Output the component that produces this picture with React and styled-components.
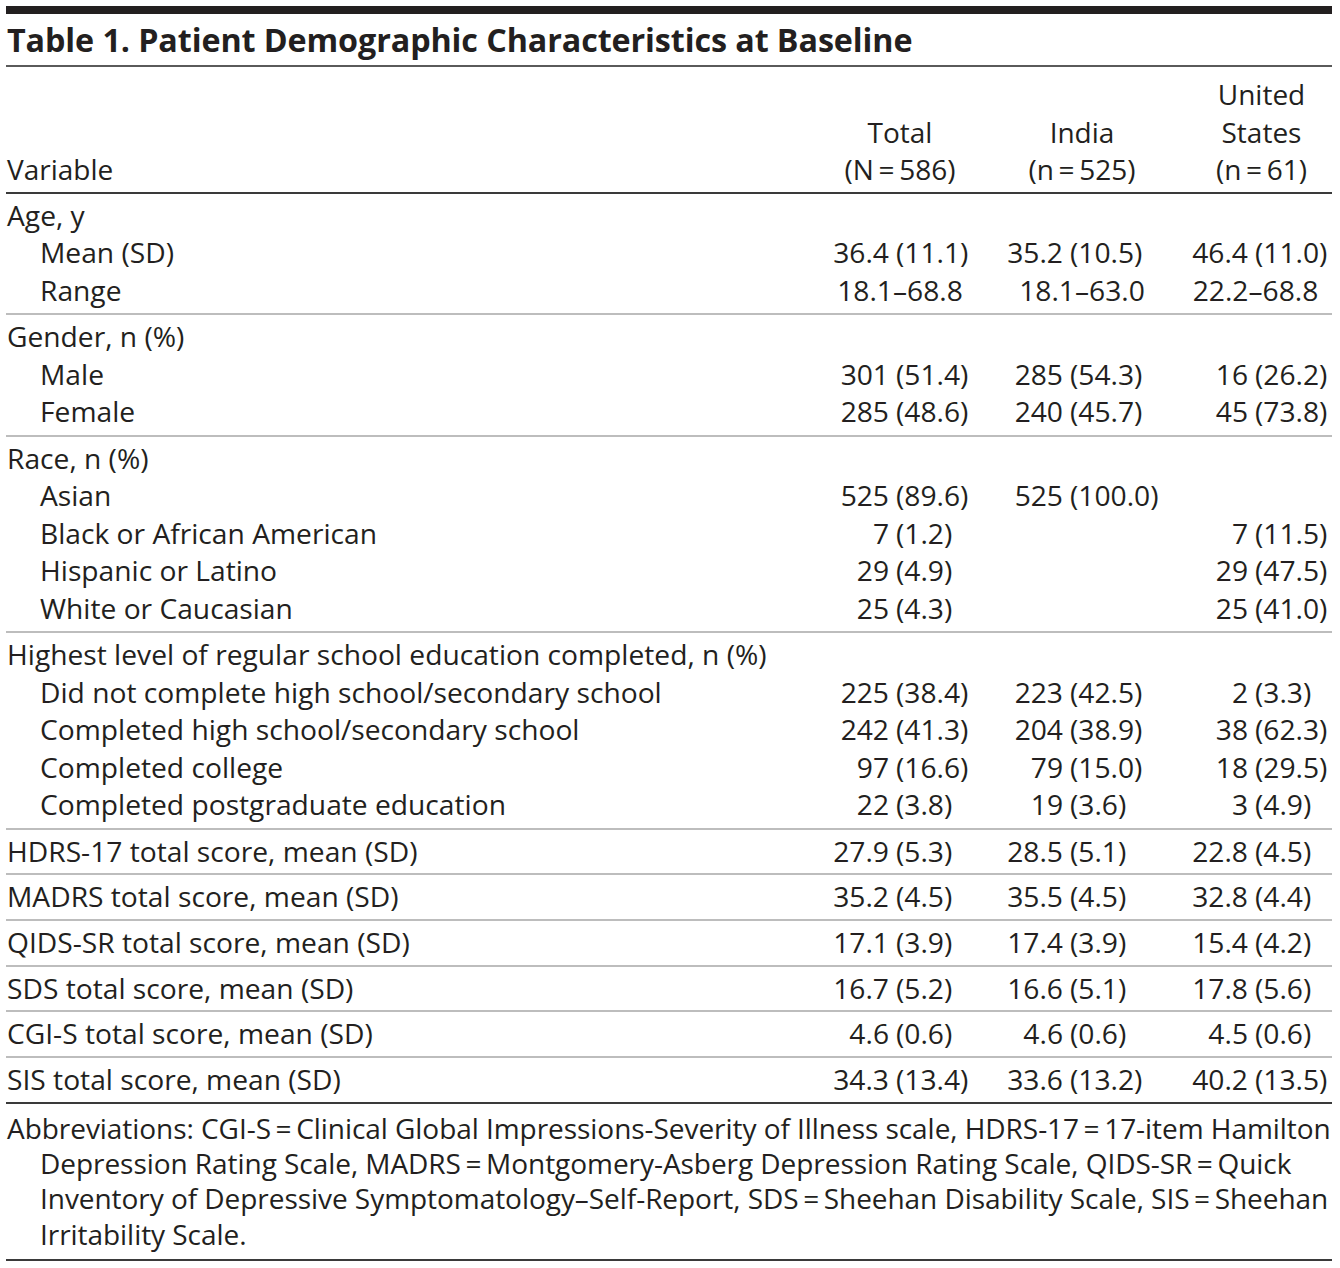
import React from 'react';
import styled, { createGlobalStyle } from 'styled-components';

const GlobalStyle = createGlobalStyle`
  html, body {
    margin: 0;
    padding: 0;
    background: #ffffff;
  }
  body {
    font-family: 'Open Sans', 'Noto Sans', sans-serif;
    color: #231f20;
  }
`;

const COLS = '1fr 170px 194px 153px';
const T = '\u2009=\u2009';

const Page = styled.div`
  width: 1326px;
  padding: 6px 8px 8px 6px;
`;

const TopRule = styled.div`
  height: 8px;
  background: #231f20;
`;

const Title = styled.h1`
  margin: 0;
  padding: 5px 0 5px 1px;
  font-size: 32.3px;
  line-height: 41px;
  font-weight: 700;
  letter-spacing: -0.1px;
  border-bottom: 2px solid #5a5a5a;
`;

const HeadRow = styled.div`
  display: grid;
  grid-template-columns: ${COLS};
  align-items: end;
  padding: 9px 0 3px;
  border-bottom: 2px solid #3a3a3a;
  font-size: 28px;
  line-height: 37.5px;
`;

const HeadCell = styled.div`
  text-align: ${(p) => (p.$left ? 'left' : 'center')};
  padding-left: ${(p) => (p.$left ? '1px' : `${p.$shift || 0}px`)};
`;

const Section = styled.div`
  padding: 3px 0 ${(p) => (p.$group ? '4px' : '3.2px')};
  border-bottom: 2px solid ${(p) => (p.$dark ? '#3a3a3a' : '#bdbdbd')};
`;

const Row = styled.div`
  display: grid;
  grid-template-columns: ${COLS};
  font-size: 28.2px;
  line-height: 37.5px;
  white-space: nowrap;
`;

const Label = styled.div`
  padding-left: ${(p) => (p.$sub ? '34px' : '1px')};
`;

const NumCell = styled.div`
  display: flex;
  justify-content: ${(p) => (p.$center ? 'center' : 'flex-start')};
`;

const Lead = styled.span`
  flex: 0 0 ${(p) => p.$w}px;
  text-align: right;
  padding-right: 7px;
  box-sizing: border-box;
`;

const Paren = styled.span``;

const Notes = styled.p`
  margin: 0;
  padding: 7px 0 7px 34px;
  text-indent: -33px;
  font-size: 28px;
  line-height: 35.3px;
  letter-spacing: -0.05px;
  white-space: nowrap;
  border-bottom: 2px solid #3a3a3a;
`;

const splits = [81, 85, 76];

const Value = ({ v, col }) => {
  if (!v) return <NumCell />;
  const i = v.indexOf(' (');
  if (i < 0) return <NumCell $center>{v}</NumCell>;
  return (
    <NumCell>
      <Lead $w={splits[col]}>{v.slice(0, i)}</Lead>
      <Paren>{v.slice(i + 1)}</Paren>
    </NumCell>
  );
};

const sections = [
  {
    label: 'Age, y',
    rows: [
      ['Mean (SD)', '36.4 (11.1)', '35.2 (10.5)', '46.4 (11.0)'],
      ['Range', '18.1–68.8', '18.1–63.0', '22.2–68.8'],
    ],
  },
  {
    label: 'Gender, n (%)',
    rows: [
      ['Male', '301 (51.4)', '285 (54.3)', '16 (26.2)'],
      ['Female', '285 (48.6)', '240 (45.7)', '45 (73.8)'],
    ],
  },
  {
    label: 'Race, n (%)',
    rows: [
      ['Asian', '525 (89.6)', '525 (100.0)', ''],
      ['Black or African American', '7 (1.2)', '', '7 (11.5)'],
      ['Hispanic or Latino', '29 (4.9)', '', '29 (47.5)'],
      ['White or Caucasian', '25 (4.3)', '', '25 (41.0)'],
    ],
  },
  {
    label: 'Highest level of regular school education completed, n (%)',
    rows: [
      ['Did not complete high school/secondary school', '225 (38.4)', '223 (42.5)', '2 (3.3)'],
      ['Completed high school/secondary school', '242 (41.3)', '204 (38.9)', '38 (62.3)'],
      ['Completed college', '97 (16.6)', '79 (15.0)', '18 (29.5)'],
      ['Completed postgraduate education', '22 (3.8)', '19 (3.6)', '3 (4.9)'],
    ],
  },
];

const scores = [
  ['HDRS-17 total score, mean (SD)', '27.9 (5.3)', '28.5 (5.1)', '22.8 (4.5)'],
  ['MADRS total score, mean (SD)', '35.2 (4.5)', '35.5 (4.5)', '32.8 (4.4)'],
  ['QIDS-SR total score, mean (SD)', '17.1 (3.9)', '17.4 (3.9)', '15.4 (4.2)'],
  ['SDS total score, mean (SD)', '16.7 (5.2)', '16.6 (5.1)', '17.8 (5.6)'],
  ['CGI-S total score, mean (SD)', '4.6 (0.6)', '4.6 (0.6)', '4.5 (0.6)'],
  ['SIS total score, mean (SD)', '34.3 (13.4)', '33.6 (13.2)', '40.2 (13.5)'],
];

const DataRow = ({ cells, sub }) => (
  <Row>
    <Label $sub={sub}>{cells[0]}</Label>
    <Value v={cells[1]} col={0} />
    <Value v={cells[2]} col={1} />
    <Value v={cells[3]} col={2} />
  </Row>
);

const App = () => {
  return (
    <Page>
      <GlobalStyle />
      <TopRule />
      <Title>Table 1. Patient Demographic Characteristics at Baseline</Title>
      <HeadRow>
        <HeadCell $left>Variable</HeadCell>
        <HeadCell>
          Total
          <br />
          (N{T}586)
        </HeadCell>
        <HeadCell>
          India
          <br />
          (n{T}525)
        </HeadCell>
        <HeadCell $shift={12}>
          United
          <br />
          States
          <br />
          (n{T}61)
        </HeadCell>
      </HeadRow>
      {sections.map((s) => (
        <Section key={s.label} $group>
          <Row>
            <Label>{s.label}</Label>
          </Row>
          {s.rows.map((r) => (
            <DataRow key={r[0]} cells={r} sub />
          ))}
        </Section>
      ))}
      {scores.map((r, i) => (
        <Section key={r[0]} $dark={i === scores.length - 1}>
          <DataRow cells={r} />
        </Section>
      ))}
      <Notes>
        Abbreviations: CGI-S{T}Clinical Global Impressions-Severity of Illness scale, HDRS-17{T}17-item Hamilton
        <br />
        Depression Rating Scale, MADRS{T}Montgomery-Asberg Depression Rating Scale, QIDS-SR{T}Quick
        <br />
        Inventory of Depressive Symptomatology–Self-Report, SDS{T}Sheehan Disability Scale, SIS{T}Sheehan
        <br />
        Irritability Scale.
      </Notes>
    </Page>
  );
};

export default App;
